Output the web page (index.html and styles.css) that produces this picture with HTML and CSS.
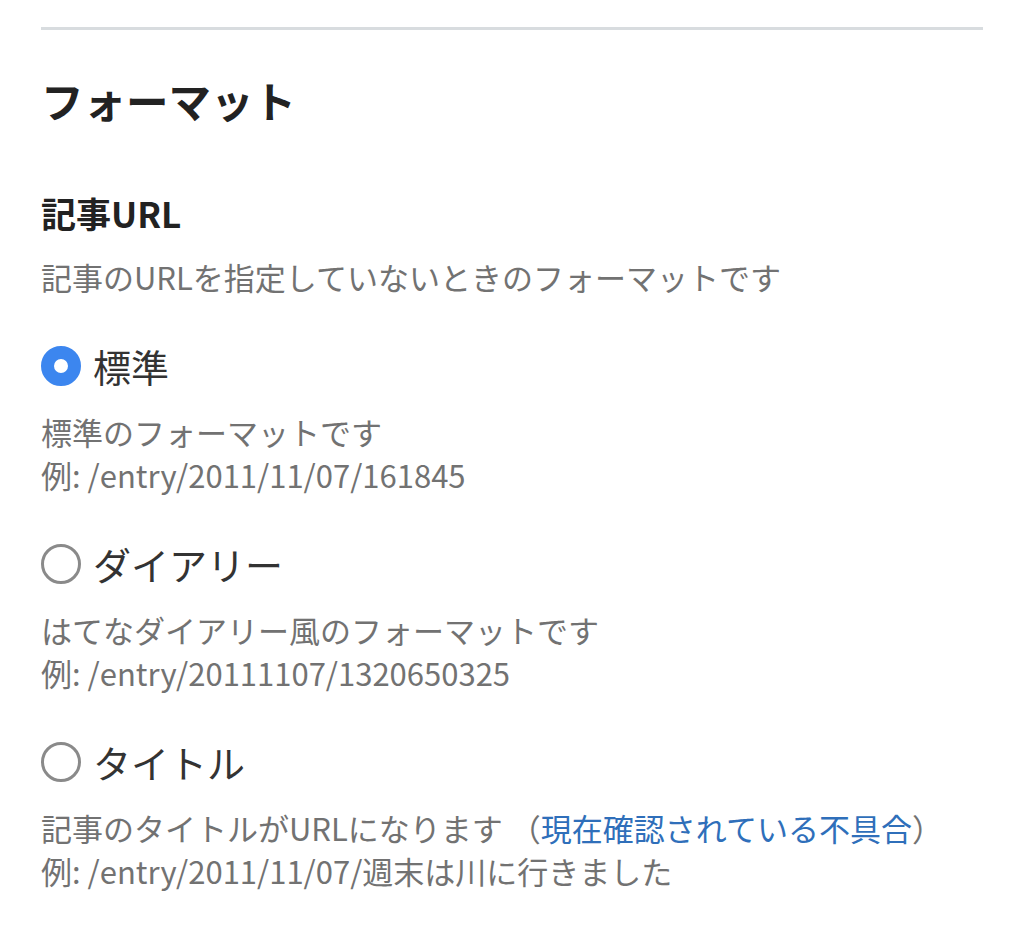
FILE: index.html
```html
<!DOCTYPE html>
<html lang="ja">
  <head>
    <meta charset="utf-8">
    <title>フォーマット</title>
    <link rel="stylesheet" href="styles.css">
  </head>
  <body>
    <div class="settings">
      <hr class="divider">
      <h2 class="section-title">フォーマット</h2>

      <h3 class="field-title">記事URL</h3>
      <p class="note">記事のURLを指定していないときのフォーマットです</p>

      <div class="option">
        <label class="option-label">
          <span class="radio radio-on"></span>
          <span>標準</span>
        </label>
        <p class="note">標準のフォーマットです<br>例: /entry/2011/11/07/161845</p>
      </div>

      <div class="option">
        <label class="option-label">
          <span class="radio"></span>
          <span>ダイアリー</span>
        </label>
        <p class="note">はてなダイアリー風のフォーマットです<br>例: /entry/20111107/1320650325</p>
      </div>

      <div class="option">
        <label class="option-label">
          <span class="radio"></span>
          <span>タイトル</span>
        </label>
        <p class="note">記事のタイトルがURLになります （<a class="bug-link" href="#">現在確認されている不具合</a>）<br>例: /entry/2011/11/07/週末は川に行きました</p>
      </div>
    </div>
  </body>
</html>
```

FILE: styles.css
```css
body {
  margin: 0;
  background-color: white;
  font-family: "Noto Sans CJK JP", "Noto Sans", sans-serif;
}
.settings {
  padding: 27px 41px 0 41px;
}
.divider {
  margin: 0;
  border: 0;
  border-top: 3px solid #d8dcdf;
}
.section-title {
  margin: 42px 0 0 0;
  font-size: 42.5px;
  line-height: 56px;
  font-weight: bold;
  color: #222;
}
.field-title {
  margin: 63px 0 0 0;
  font-size: 35px;
  line-height: 44px;
  font-weight: bold;
  color: #222;
}
.note {
  margin: 20px 0 0 0;
  font-size: 31px;
  line-height: 43px;
  color: #727272;
}
.option {
  margin-top: 46px;
}
.option-label {
  display: flex;
  align-items: center;
  gap: 12px;
  font-size: 38px;
  line-height: 44px;
  color: #333;
}
.option .note {
  margin-top: 22px;
}
.radio {
  box-sizing: border-box;
  width: 40px;
  height: 40px;
  border-radius: 50%;
  border: 3px solid #8a8a8a;
  background-color: white;
  flex-shrink: 0;
}
.radio-on {
  border: 13.5px solid #3c86ef;
}
.bug-link {
  color: #2f6fba;
  text-decoration: none;
}
```
